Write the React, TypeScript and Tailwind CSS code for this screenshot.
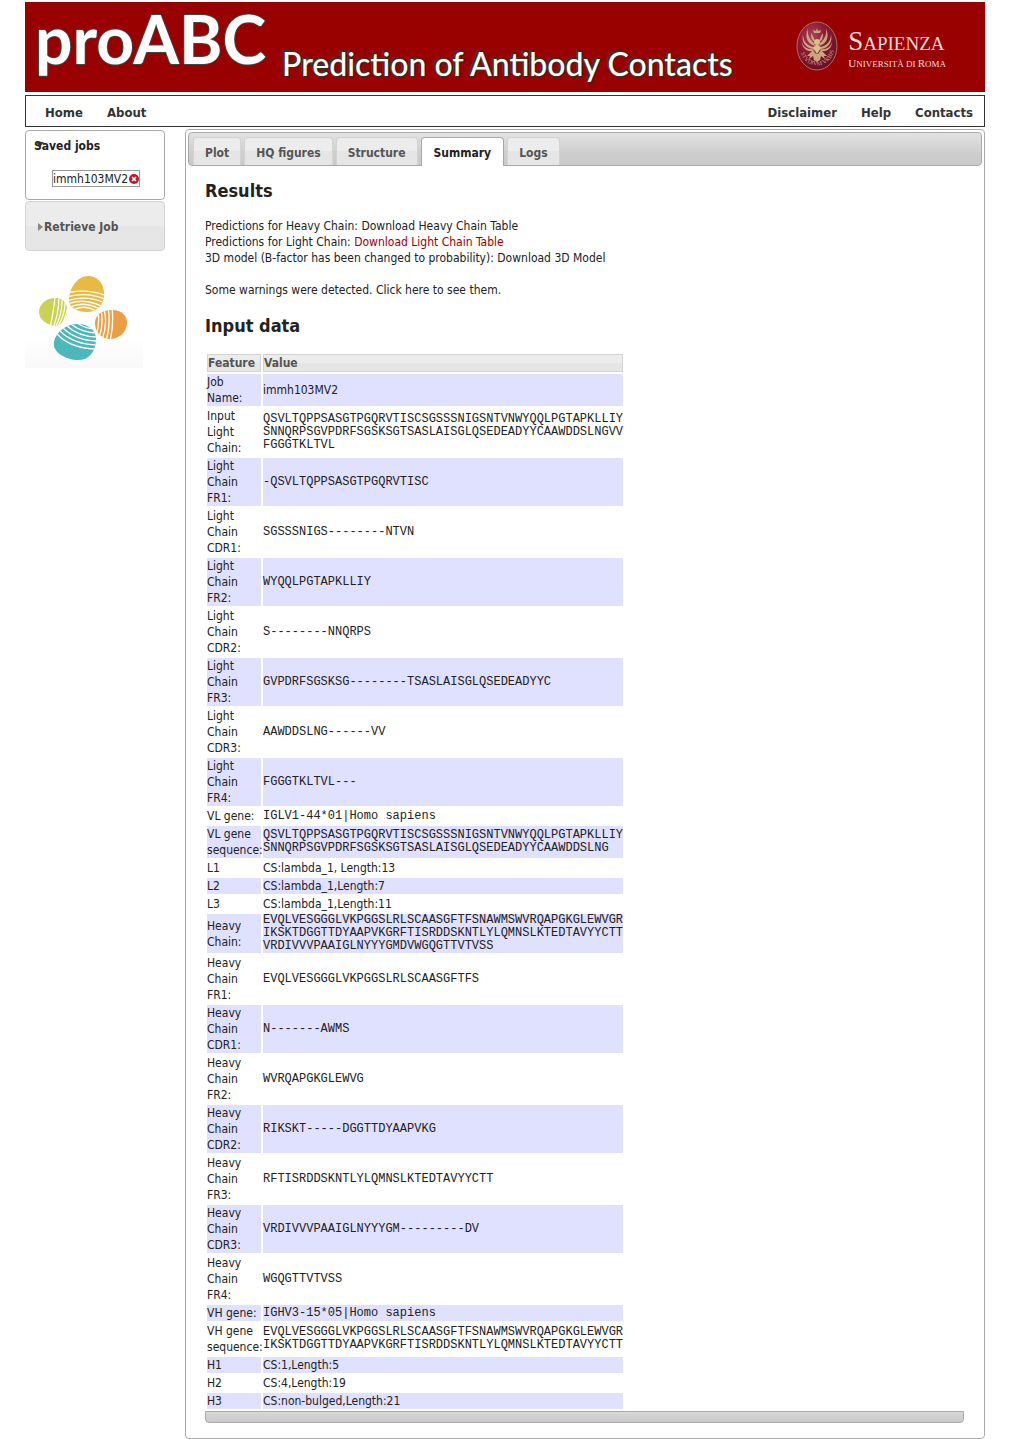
import type { ReactNode } from "react";

type Row = { feature: string; lines: string[]; mono?: "block" | "inline" };

const VL1 = "QSVLTQPPSASGTPGQRVTISCSGSSSNIGSNTVNWYQQLPGTAPKLLIY";
const VH1 = "EVQLVESGGGLVKPGGSLRLSCAASGFTFSNAWMSWVRQAPGKGLEWVGR";
const VH2 = "IKSKTDGGTTDYAAPVKGRFTISRDDSKNTLYLQMNSLKTEDTAVYYCTT";

const rows: Row[] = [
  { feature: "Job Name:", lines: ["immh103MV2"] },
  {
    feature: "Input Light Chain:",
    lines: [VL1, "SNNQRPSGVPDRFSGSKSGTSASLAISGLQSEDEADYYCAAWDDSLNGVV", "FGGGTKLTVL"],
    mono: "block",
  },
  { feature: "Light Chain FR1:", lines: ["-QSVLTQPPSASGTPGQRVTISC"], mono: "block" },
  { feature: "Light Chain CDR1:", lines: ["SGSSSNIGS--------NTVN"], mono: "block" },
  { feature: "Light Chain FR2:", lines: ["WYQQLPGTAPKLLIY"], mono: "block" },
  { feature: "Light Chain CDR2:", lines: ["S--------NNQRPS"], mono: "block" },
  { feature: "Light Chain FR3:", lines: ["GVPDRFSGSKSG--------TSASLAISGLQSEDEADYYC"], mono: "block" },
  { feature: "Light Chain CDR3:", lines: ["AAWDDSLNG------VV"], mono: "block" },
  { feature: "Light Chain FR4:", lines: ["FGGGTKLTVL---"], mono: "block" },
  { feature: "VL gene:", lines: ["IGLV1-44*01|Homo sapiens"], mono: "inline" },
  {
    feature: "VL gene sequence:",
    lines: [VL1, "SNNQRPSGVPDRFSGSKSGTSASLAISGLQSEDEADYYCAAWDDSLNG"],
    mono: "block",
  },
  { feature: "L1", lines: ["CS:lambda_1, Length:13"] },
  { feature: "L2", lines: ["CS:lambda_1,Length:7"] },
  { feature: "L3", lines: ["CS:lambda_1,Length:11"] },
  { feature: "Heavy Chain:", lines: [VH1, VH2, "VRDIVVVPAAIGLNYYYGMDVWGQGTTVTVSS"], mono: "block" },
  { feature: "Heavy Chain FR1:", lines: ["EVQLVESGGGLVKPGGSLRLSCAASGFTFS"], mono: "block" },
  { feature: "Heavy Chain CDR1:", lines: ["N-------AWMS"], mono: "block" },
  { feature: "Heavy Chain FR2:", lines: ["WVRQAPGKGLEWVG"], mono: "block" },
  { feature: "Heavy Chain CDR2:", lines: ["RIKSKT-----DGGTTDYAAPVKG"], mono: "block" },
  { feature: "Heavy Chain FR3:", lines: ["RFTISRDDSKNTLYLQMNSLKTEDTAVYYCTT"], mono: "block" },
  { feature: "Heavy Chain CDR3:", lines: ["VRDIVVVPAAIGLNYYYGM---------DV"], mono: "block" },
  { feature: "Heavy Chain FR4:", lines: ["WGQGTTVTVSS"], mono: "block" },
  { feature: "VH gene:", lines: ["IGHV3-15*05|Homo sapiens"], mono: "inline" },
  { feature: "VH gene sequence:", lines: [VH1, VH2], mono: "block" },
  { feature: "H1", lines: ["CS:1,Length:5"] },
  { feature: "H2", lines: ["CS:4,Length:19"] },
  { feature: "H3", lines: ["CS:non-bulged,Length:21"] },
];

const tabs = ["Plot", "HQ figures", "Structure", "Summary", "Logs"];

function Emblem() {
  return (
    <svg width="42" height="50" viewBox="0 0 42 50" aria-hidden="true">
      <defs>
        <radialGradient id="seal" cx="38%" cy="30%" r="70%">
          <stop offset="0" stopColor="#a8455a" />
          <stop offset="0.5" stopColor="#8a1834" />
          <stop offset="1" stopColor="#6d0f26" />
        </radialGradient>
        <path id="motto" d="M4 30 A17.5 19 0 0 0 38 30" />
      </defs>
      <ellipse cx="21" cy="25" rx="20" ry="24" fill="url(#seal)" stroke="#b0705f" strokeWidth="1" />
      <g fill="#c9a67c">
        <path d="M12 7C11 13 13 18 18 22L19 25C12 23 8 17 12 7Z" />
        <path d="M7 13C7 20 11 25 18 26L18 28C10 28 5 21 7 13Z" />
        <path d="M6 21C7 26 12 29 18 28L17 30C11 31 6 27 6 21Z" />
        <path d="M30 7C31 13 29 18 24 22L23 25C30 23 34 17 30 7Z" />
        <path d="M35 13C35 20 31 25 24 26L24 28C32 28 37 21 35 13Z" />
        <path d="M36 21C35 26 30 29 24 28L25 30C31 31 36 27 36 21Z" />
        <path d="M17 29L11 35L14 35L13 38L17 35L18 39L21 41L24 39L25 35L29 38L28 35L31 35L25 29L22 33H20Z" />
        <path d="M15 12C17 15 18 17 19 20L17 20C15 17 15 15 15 12ZM27 12C25 15 24 17 23 20L25 20C27 17 27 15 27 12Z" />
      </g>
      <circle cx="21" cy="21" r="3" fill="#dcbf91" />
      <path d="M17 27Q21 20 25 27L21 33Z" fill="#dcbf91" />
      <path d="M18 12L17 9L20 10L21 7L22 10L25 9L24 12Z" fill="#c9a67c" />
      <text fontFamily="Liberation Serif, serif" fontSize="6" fill="#c9a080">
        <textPath href="#motto" startOffset="2">STVDIVM VRBIS</textPath>
      </text>
    </svg>
  );
}

function PetalLogo() {
  return (
    <svg className="block" width="118" height="113" viewBox="0 0 118 113" aria-hidden="true">
      <defs>
        <linearGradient id="fade" x1="0" y1="0" x2="0" y2="1">
          <stop offset="0.7" stopColor="#fff" />
          <stop offset="1" stopColor="#f9f9f9" />
        </linearGradient>
        <clipPath id="top"><path d="M44 45C44 34 52 21 63 21C74 21 80 31 79 41C78 51 71 57 62 57C53 57 44 53 44 45Z" /></clipPath>
        <clipPath id="left"><path d="M14 57C14 48 23 42 32 43C40 44 43 50 42 57C41 65 36 71 30 71C23 70 14 65 14 57Z" /></clipPath>
        <clipPath id="right"><path d="M70 68C70 59 78 55 87 55C97 55 102 61 102 68C102 77 94 84 85 84C76 84 70 77 70 68Z" /></clipPath>
        <clipPath id="bottom"><path d="M29 87C31 76 42 69 53 69C65 69 72 77 71 86C70 98 63 106 51 105C40 104 27 97 29 87Z" /></clipPath>
      </defs>
      <rect width="118" height="113" fill="url(#fade)" />
      <g clipPath="url(#top)">
        <rect x="42" y="19" width="40" height="40" fill="#e9b944" />
        <path fill="none" stroke="#fff" strokeWidth="1.3" d="M42 38Q62 33 82 41M42 42Q62 36 82 45M42 46Q62 39 82 49M43 49Q61 42 80 53M45 52Q61 45 78 56M48 55Q61 48 75 59" />
      </g>
      <g clipPath="url(#left)">
        <rect x="12" y="39" width="32" height="34" fill="#cbd253" />
        <path fill="none" stroke="#fff" strokeWidth="1.2" d="M30 41Q29 55 25 73M34 41Q34 58 28 73M37 42Q38 58 30 73M40 43Q41 59 32 73M43 45Q43 61 35 72" />
      </g>
      <g clipPath="url(#right)">
        <rect x="69" y="53" width="35" height="33" fill="#eb9e43" />
        <path fill="none" stroke="#fff" strokeWidth="1.4" d="M87 53Q89 69 85 86M83 53Q86 69 81 86M79 54Q83 69 77 85M76 55Q79 69 74 83M73 57Q75 69 71 80" />
      </g>
      <g clipPath="url(#bottom)">
        <rect x="27" y="67" width="47" height="40" fill="#4db8bb" />
        <path fill="none" stroke="#fff" strokeWidth="1.3" d="M32 79Q46 94 73 94M35 76Q49 90 74 90M38 73Q51 86 74 86M42 71Q54 82 73 82M46 69Q57 78 73 78M52 68Q61 74 71 74" />
      </g>
    </svg>
  );
}

function NavLink({ children }: { children: ReactNode }) {
  return (
    <a href="#" className="text-[13px] leading-4 font-bold text-[#333]">
      {children}
    </a>
  );
}

function Header() {
  return (
    <header className="flex h-[90px] items-start justify-between bg-[#990000]">
      <div className="flex items-start gap-4 pl-[10px] whitespace-nowrap">
        <h1 className="font-['Lato'] text-[66px] leading-[74px] font-bold text-white [text-shadow:1px_0_#444,-1px_0_#444,0_1px_#444,0_-1px_#444]">
          proABC
        </h1>
        <p className="pt-[46px] font-['Lato'] text-[32px] leading-8 font-medium text-[#fffdf0] [text-shadow:-1px_-1px_#333,-2px_-2px_#333,1px_0_#333,0_1px_#333]">
          Prediction of Antibody Contacts
        </p>
      </div>
      <div className="flex items-start gap-[10px] pt-[19px] pr-[39px]">
        <Emblem />
        <div className="pt-[6px] font-['Liberation_Serif'] whitespace-nowrap text-[#f3dcdc]">
          <p className="text-[19px] leading-7"><span className="text-[27px]">S</span>APIENZA</p>
          <p className="text-[9px] leading-[10px]">
            <span className="text-[11px]">U</span>NIVERSITÀ DI <span className="text-[11px]">R</span>OMA
          </p>
        </div>
      </div>
    </header>
  );
}

function Sidebar() {
  return (
    <aside className="w-[140px] shrink-0 pt-px">
      <section className="h-[70px] rounded-[4px] border border-[#aaa] bg-white">
        <h3 className="relative mt-[7px] ml-2 text-[12px] leading-4 font-bold text-[#222]">
          <button type="button">Saved jobs</button>
          <svg className="absolute top-1 left-[2px]" width="8" height="5" viewBox="0 0 8 5" aria-hidden="true">
            <path d="M0 0H8L4 5Z" fill="#333" />
          </svg>
        </h3>
        <div className="mt-4 ml-[26px] flex h-[17px] w-[88px] items-center justify-between border border-[#999]">
          <a href="#">immh103MV2</a>
          <button type="button" aria-label="Delete job">
            <svg width="10" height="10" viewBox="0 0 10 10" aria-hidden="true">
              <circle cx="5" cy="5" r="5" fill="#c41420" />
              <path d="M3 3L7 7M7 3L3 7" stroke="#fff" strokeWidth="1.7" />
            </svg>
          </button>
        </div>
      </section>
      <button
        type="button"
        className="mt-px flex h-[50px] w-full items-center rounded-[4px] border border-[#d3d3d3] bg-linear-to-b from-[#ececec] from-50% to-[#e6e6e6] to-50% pt-px pl-3 font-bold text-[#555]"
      >
        <svg className="mr-px" width="5" height="8" viewBox="0 0 5 8" aria-hidden="true">
          <path d="M0 0L5 4L0 8Z" fill="#888" />
        </svg>
        Retrieve Job
      </button>
      <div className="mt-1">
        <PetalLogo />
      </div>
    </aside>
  );
}

function Tabs() {
  return (
    <div
      role="tablist"
      className="flex h-[34px] items-end gap-[3px] rounded-[4px] border border-[#aaa] bg-linear-to-b from-[#e2e2e2] via-[#cfcfcf] via-60% to-[#cacaca] pl-1"
    >
      {tabs.map((tab) => (
        <button
          key={tab}
          type="button"
          role="tab"
          aria-selected={tab === "Summary"}
          className={
            tab === "Summary"
              ? "-mb-px h-[29px] rounded-t-[4px] border border-b-0 border-[#aaa] bg-white px-3 pt-px font-bold text-[#212121]"
              : "h-7 rounded-t-[4px] border border-b-0 border-[#d3d3d3] bg-linear-to-b from-[#ececec] from-50% to-[#e5e5e5] to-50% px-[11px] pt-[2px] font-bold text-[#555]"
          }
        >
          {tab}
        </button>
      ))}
    </div>
  );
}

function DataTable() {
  return (
    <table className="w-[420px] table-fixed border-separate border-spacing-[2px] text-left">
      <thead>
        <tr className="text-[#555]">
          <th className="w-[54px] border border-[#d3d3d3] bg-linear-to-b from-[#ececec] from-50% to-[#e5e5e5] to-50% p-0 font-bold">Feature</th>
          <th className="border border-[#d3d3d3] bg-linear-to-b from-[#ececec] from-50% to-[#e5e5e5] to-50% p-0 font-bold">Value</th>
        </tr>
      </thead>
      <tbody>
        {rows.map((row) => (
          <tr key={row.feature} className="odd:*:bg-[#e0e0ff]">
            <td className="p-0 align-middle">{row.feature}</td>
            <td className="p-0 align-middle">
              {row.mono ? (
                <div className={row.mono === "block" ? "font-['Liberation_Mono'] leading-[13px] whitespace-nowrap" : "font-['Liberation_Mono'] whitespace-nowrap"}>
                  {row.lines.map((line) => (
                    <div key={line}>{line}</div>
                  ))}
                </div>
              ) : (
                row.lines[0]
              )}
            </td>
          </tr>
        ))}
      </tbody>
    </table>
  );
}

export default function App() {
  return (
    <div className="bg-white pt-[2px] pr-6 pl-[25px] font-['DejaVu_Sans_Condensed','DejaVu_Sans',sans-serif] text-[12px] leading-4 text-[#222]">
      <Header />
      <nav className="mt-[3px] flex h-8 items-center justify-between border border-[#333] pt-[3px] pr-[11px] pl-[19px]">
        <div className="flex gap-6">
          <NavLink>Home</NavLink>
          <NavLink>About</NavLink>
        </div>
        <div className="flex gap-6">
          <NavLink>Disclaimer</NavLink>
          <NavLink>Help</NavLink>
          <NavLink>Contacts</NavLink>
        </div>
      </nav>
      <div className="mt-[2px] flex items-start gap-5">
        <Sidebar />
        <main className="min-w-0 flex-1 rounded-[4px] border border-[#aaa] px-[2px] pt-[2px] pb-[15px]">
          <Tabs />
          <div className="pr-[18px] pl-[17px] pt-4">
            <h2 className="text-[18px] leading-[18px] font-bold">Results</h2>
            <p className="mt-[18px]">
              Predictions for Heavy Chain: <a href="#">Download Heavy Chain Table</a>
              <br />
              Predictions for Light Chain: <a href="#" className="text-[#990000]">Download Light Chain Table</a>
              <br />
              3D model (B-factor has been changed to probability): <a href="#">Download 3D Model</a>
            </p>
            <p className="mt-4">
              Some warnings were detected. <a href="#">Click here to see them.</a>
            </p>
            <h2 className="mt-[19px] mb-[17px] text-[18px] leading-[18px] font-bold">Input data</h2>
            <DataTable />
            <div className="h-3 rounded-b-[4px] border border-[#aaa] bg-linear-to-b from-[#d8d8d8] to-[#cacaca]" />
          </div>
        </main>
      </div>
    </div>
  );
}
